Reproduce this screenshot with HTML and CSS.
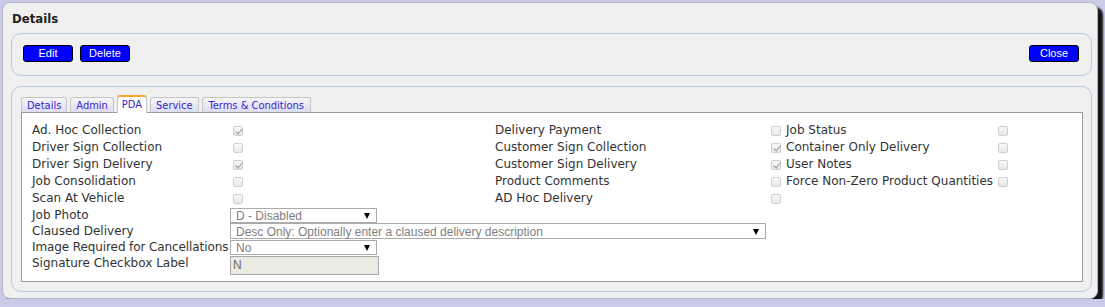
FILE: index.html
```html
<!DOCTYPE html>
<html lang="en">
<head>
    <meta charset="UTF-8">
    <meta name="viewport" content="width=device-width, initial-scale=1.0">
    <title>Details</title>
    <link rel="stylesheet" href="styles.css">
</head>
<body>
    <div class="dialog">
        <h1 class="dialog-title">Details</h1>

        <div class="box toolbar">
            <div class="toolbar-left">
                <button class="btn">Edit</button>
                <button class="btn">Delete</button>
            </div>
            <button class="btn">Close</button>
        </div>

        <div class="box tabbox">
            <ul class="tabs">
                <li class="tab">Details</li>
                <li class="tab">Admin</li>
                <li class="tab active">PDA</li>
                <li class="tab">Service</li>
                <li class="tab">Terms &amp; Conditions</li>
            </ul>

            <div class="panel">
                <div class="grid">
                    <span class="lbl first">Ad. Hoc Collection</span>
                    <span class="cell"><input type="checkbox" class="chk" checked disabled></span>
                    <span class="lbl">Delivery Payment</span>
                    <span class="cell"><input type="checkbox" class="chk" disabled></span>
                    <span class="lbl">Job Status</span>
                    <span class="cell"><input type="checkbox" class="chk" disabled></span>

                    <span class="lbl first">Driver Sign Collection</span>
                    <span class="cell"><input type="checkbox" class="chk" disabled></span>
                    <span class="lbl">Customer Sign Collection</span>
                    <span class="cell"><input type="checkbox" class="chk" checked disabled></span>
                    <span class="lbl">Container Only Delivery</span>
                    <span class="cell"><input type="checkbox" class="chk" disabled></span>

                    <span class="lbl first">Driver Sign Delivery</span>
                    <span class="cell"><input type="checkbox" class="chk" checked disabled></span>
                    <span class="lbl">Customer Sign Delivery</span>
                    <span class="cell"><input type="checkbox" class="chk" checked disabled></span>
                    <span class="lbl">User Notes</span>
                    <span class="cell"><input type="checkbox" class="chk" disabled></span>

                    <span class="lbl first">Job Consolidation</span>
                    <span class="cell"><input type="checkbox" class="chk" disabled></span>
                    <span class="lbl">Product Comments</span>
                    <span class="cell"><input type="checkbox" class="chk" disabled></span>
                    <span class="lbl">Force Non-Zero Product Quantities</span>
                    <span class="cell"><input type="checkbox" class="chk" disabled></span>

                    <span class="lbl first">Scan At Vehicle</span>
                    <span class="cell"><input type="checkbox" class="chk" disabled></span>
                    <span class="lbl">AD Hoc Delivery</span>
                    <span class="cell"><input type="checkbox" class="chk" disabled></span>

                    <span class="lbl first">Job Photo</span>
                    <span class="cell"><span class="select">D - Disabled<span class="arrow"></span></span></span>

                    <span class="lbl first">Claused Delivery</span>
                    <span class="cell wide"><span class="select select-wide">Desc Only: Optionally enter a claused delivery description<span class="arrow"></span></span></span>

                    <span class="lbl first tight">Image Required for Cancellations</span>
                    <span class="cell"><span class="select">No<span class="arrow"></span></span></span>

                    <span class="lbl first">Signature Checkbox Label</span>
                    <span class="cell"><input type="text" class="txt" value="N" disabled></span>
                </div>
            </div>
        </div>
    </div>
</body>
</html>
```

FILE: styles.css
```css
body {
    margin: 0;
    padding: 2px 0 0 2px;
    background: #c9cbe9;
    font-family: "DejaVu Sans", sans-serif;
    color: #333;
}
.dialog {
    width: 1096px;
    height: 297px;
    box-sizing: border-box;
    background: #f0f0f0;
    border: 1px solid #b4b4c0;
    border-radius: 8px;
    box-shadow: 5px 5px 2px rgba(0, 0, 0, 0.9);
    padding: 0 0 0 8px;
}
.dialog-title {
    margin: 0;
    padding: 8px 0 0 1px;
    height: 22px;
    font-family: "DejaVu Sans Condensed", "DejaVu Sans", sans-serif;
    font-size: 13px;
    line-height: 16px;
    font-weight: bold;
    color: #222;
}
.box {
    width: 1081px;
    box-sizing: border-box;
    border: 1px solid #b9c8e0;
    border-radius: 10px;
}
.toolbar {
    height: 43px;
    display: flex;
    justify-content: space-between;
    align-items: flex-start;
    padding: 11px 12px 0 11px;
}
.toolbar-left {
    display: flex;
    gap: 7px;
}
.btn {
    width: 50px;
    height: 17px;
    padding: 0;
    background: #0000ff;
    color: #fff;
    border: 1px solid #000;
    border-radius: 3px;
    font-family: "Liberation Sans", Arial, sans-serif;
    font-size: 11px;
    line-height: 15px;
}
.tabbox {
    margin-top: 10px;
    height: 206px;
    padding: 10px 8px 0 9px;
}
.tabs {
    list-style: none;
    margin: 0;
    padding: 0;
    display: flex;
    align-items: flex-end;
    gap: 3px;
    height: 15px;
}
.tab {
    height: 14px;
    padding: 0 5px;
    border: 1px solid #c6c6c6;
    border-bottom: none;
    border-radius: 3px 3px 0 0;
    background: linear-gradient(#f6f6f6, #dcdcf2);
    color: #3a24d2;
    font-family: "DejaVu Sans Condensed", "DejaVu Sans", sans-serif;
    font-size: 11px;
    line-height: 15px;
}
.tab:last-child {
    padding: 0 6px;
}
.tab.active {
    height: 16px;
    padding: 0 4px;
    background: #fff;
    border-top: 2px solid #f4a72c;
    border-color: #f4a72c #c6c6c6 #fff;
    position: relative;
    z-index: 1;
    margin-bottom: -1px;
}
.panel {
    height: 170px;
    box-sizing: border-box;
    background: #fff;
    border: 1px solid #9c9c9c;
    padding: 9px 0 0 10px;
}
.grid {
    display: grid;
    grid-template-columns: 198px 265px 273px 18px 209px 1fr;
    grid-template-rows: repeat(5, 17px) 16px 16px 16px 19px;
    font-size: 12px;
}
.lbl {
    line-height: 17px;
    white-space: nowrap;
}
.tight {
    letter-spacing: -0.1px;
}
.first {
    grid-column: 1;
}
.cell {
    display: flex;
    align-items: center;
}
.wide {
    grid-column: 2 / span 2;
}
.chk {
    appearance: none;
    -webkit-appearance: none;
    width: 10px;
    height: 10px;
    margin: 0 0 0 3px;
    border: 1px solid #cfcfcf;
    border-radius: 2px;
    background: linear-gradient(#f8f8f8, #e8e8e8);
    position: relative;
}
.chk:checked::after {
    content: "";
    position: absolute;
    left: 3px;
    top: 0;
    width: 3px;
    height: 6px;
    border: solid #9a9a9a;
    border-width: 0 1.5px 1.5px 0;
    transform: rotate(40deg);
}
.select {
    display: flex;
    align-items: center;
    justify-content: space-between;
    width: 147px;
    height: 15px;
    box-sizing: border-box;
    border: 1px solid #ababab;
    background: #fff;
    padding: 1px 6px 0 5px;
    font-family: "Liberation Sans", Arial, sans-serif;
    font-size: 12px;
    color: #808080;
    white-space: nowrap;
}
.select-wide {
    width: 536px;
    height: 16px;
}
.arrow {
    width: 0;
    height: 0;
    border-left: 3.5px solid transparent;
    border-right: 3.5px solid transparent;
    border-top: 6px solid #000;
}
.txt {
    width: 149px;
    height: 19px;
    box-sizing: border-box;
    margin: 1px 0 0 0;
    padding: 0 2px;
    border: 1px solid #a9a9a9;
    background: #ebebe4;
    font-family: "Liberation Sans", Arial, sans-serif;
    font-size: 12px;
    color: #6d6d6d;
}
```
